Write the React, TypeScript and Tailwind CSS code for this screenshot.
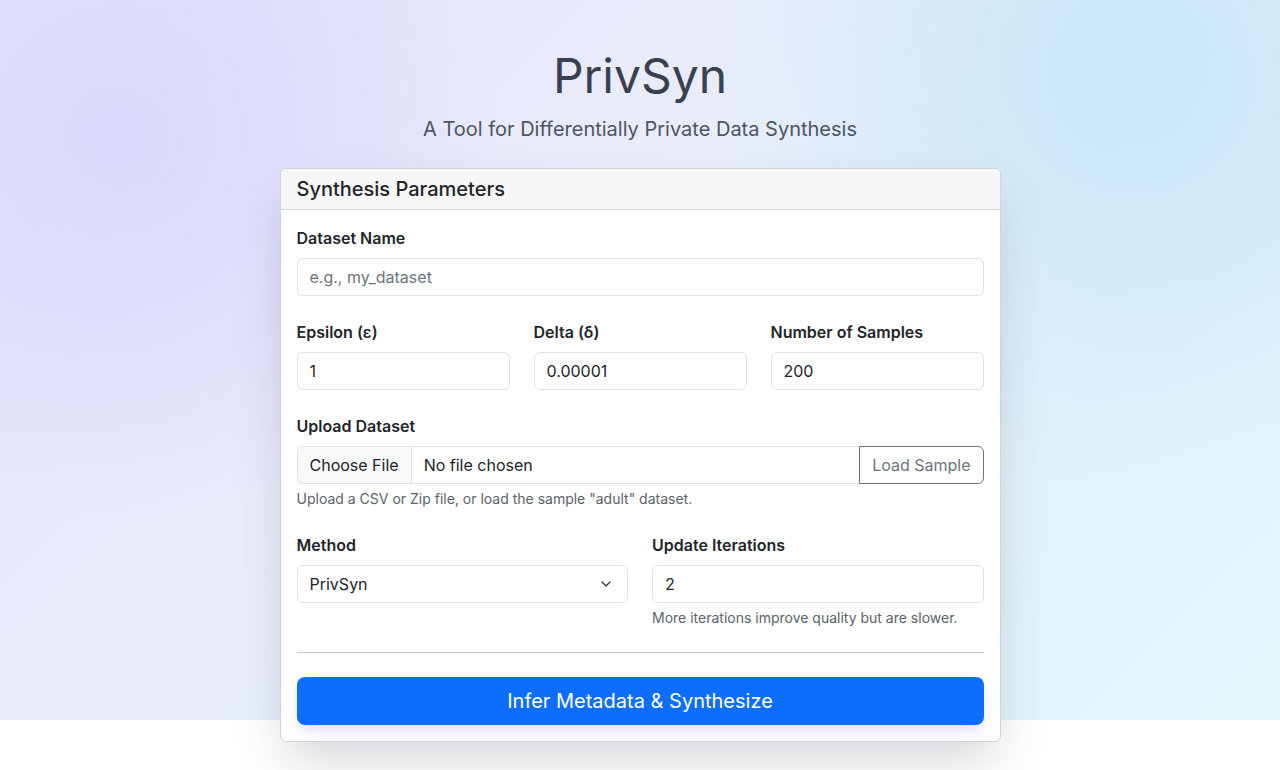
import {ChevronDown} from 'lucide-react'

const font = {fontFamily: 'Inter, "Noto Sans", sans-serif'}

function Label({children}: {children: string}) {
  return <label className="mb-2 block text-base leading-6 font-semibold text-[#212529]">{children}</label>
}

function TextInput({value, placeholder}: {value?: string; placeholder?: string}) {
  return (
    <input
      readOnly
      value={value}
      placeholder={placeholder}
      className="block h-[38px] w-full rounded-md border border-[#dee2e6] bg-white px-3 text-base text-[#212529] outline-none placeholder:text-[#6c757d]"
    />
  )
}

function Help({children}: {children: string}) {
  return <p className="mt-1 text-sm leading-[21px] text-[#5c636a]">{children}</p>
}

export default function App() {
  return (
    <div className="min-h-[770px] bg-white" style={font}>
      <div className="h-[720px] bg-[radial-gradient(circle_at_120px_140px,rgba(214,214,250,0.9)_0,rgba(214,214,250,0)_380px),radial-gradient(circle_at_1130px_70px,rgba(200,230,247,0.95)_0,rgba(200,230,247,0)_420px),linear-gradient(135deg,#e4e3fa_0%,#eaeefb_45%,#e2f2fb_75%,#e4f7fd_100%)]">
        <header className="pt-[46px] text-center">
          <h1 className="text-[48px] leading-[60px] font-normal text-[#374151]">PrivSyn</h1>
          <p className="mt-[8px] text-xl leading-[30px] text-[#4b5563]">
            A Tool for Differentially Private Data Synthesis
          </p>
        </header>

        <main className="mx-auto mt-[24px] w-[721px] rounded-md border border-[#d1d5db] bg-white shadow-[0_24px_48px_-8px_rgba(60,60,80,0.22)]">
          <div className="rounded-t-md border-b border-[#d1d5db] bg-[#f7f7f7] px-4 py-[7px] text-xl leading-[26px] font-medium text-[#212529]">
            Synthesis Parameters
          </div>

          <div className="p-4">
            <div className="mb-6">
              <Label>Dataset Name</Label>
              <TextInput placeholder="e.g., my_dataset" />
            </div>

            <div className="mb-6 grid grid-cols-3 gap-6">
              <div>
                <Label>Epsilon (ε)</Label>
                <TextInput value="1" />
              </div>
              <div>
                <Label>Delta (δ)</Label>
                <TextInput value="0.00001" />
              </div>
              <div>
                <Label>Number of Samples</Label>
                <TextInput value="200" />
              </div>
            </div>

            <div className="mb-6">
              <Label>Upload Dataset</Label>
              <div className="flex h-[38px]">
                <div className="flex flex-1 overflow-hidden rounded-l-md border border-r-0 border-[#dee2e6] text-base text-[#212529]">
                  <span className="flex items-center border-r border-[#dee2e6] bg-[#f8f9fa] px-3">Choose File</span>
                  <span className="flex items-center px-3">No file chosen</span>
                </div>
                <button className="rounded-r-md border border-[#6c757d] px-3 text-base text-[#6c757d]">Load Sample</button>
              </div>
              <Help>Upload a CSV or Zip file, or load the sample "adult" dataset.</Help>
            </div>

            <div className="mb-6 grid grid-cols-2 gap-6">
              <div>
                <Label>Method</Label>
                <div className="flex h-[38px] items-center justify-between rounded-md border border-[#dee2e6] bg-white pr-[13px] pl-3 text-base text-[#212529]">
                  <span>PrivSyn</span>
                  <ChevronDown size={16} strokeWidth={2} className="text-[#343a40]" />
                </div>
              </div>
              <div>
                <Label>Update Iterations</Label>
                <TextInput value="2" />
                <Help>More iterations improve quality but are slower.</Help>
              </div>
            </div>

            <hr className="mb-6 border-t border-[#c4c6c9]" />

            <button className="h-12 w-full rounded-lg bg-[#0d6efd] text-xl text-white shadow-[0_8px_16px_-4px_rgba(99,102,241,0.25)]">
              Infer Metadata &amp; Synthesize
            </button>
          </div>
        </main>
      </div>
    </div>
  )
}
